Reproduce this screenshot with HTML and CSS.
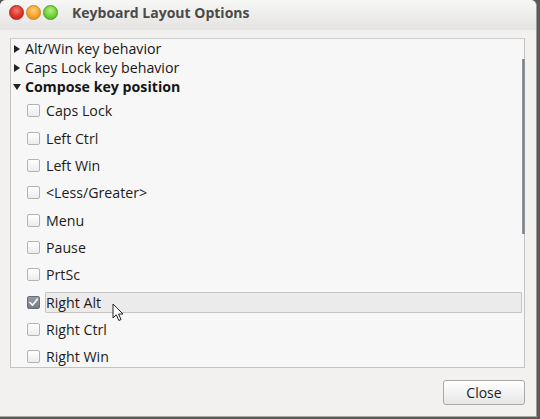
FILE: index.html
```html
<!DOCTYPE html>
<html>
<head>
<meta charset="utf-8">
<link rel="stylesheet" href="styles.css">
</head>
<body>
<div class="window">
  <div class="titlebar">
    <div class="wbtns">
      <span class="wbtn close"></span>
      <span class="wbtn min"></span>
      <span class="wbtn max"></span>
    </div>
    <span class="title">Keyboard Layout Options</span>
  </div>
  <div class="content">
    <div class="tree">
      <div class="group"><span class="tri right"></span><span>Alt/Win key behavior</span></div>
      <div class="group"><span class="tri right"></span><span>Caps Lock key behavior</span></div>
      <div class="group bold"><span class="tri down"></span><span>Compose key position</span></div>
      <div class="options">
        <div class="opt"><span class="cb"></span><span class="lbl">Caps Lock</span></div>
        <div class="opt"><span class="cb"></span><span class="lbl">Left Ctrl</span></div>
        <div class="opt"><span class="cb"></span><span class="lbl">Left Win</span></div>
        <div class="opt"><span class="cb"></span><span class="lbl">&lt;Less/Greater&gt;</span></div>
        <div class="opt"><span class="cb"></span><span class="lbl">Menu</span></div>
        <div class="opt"><span class="cb"></span><span class="lbl">Pause</span></div>
        <div class="opt"><span class="cb"></span><span class="lbl">PrtSc</span></div>
        <div class="opt hover"><span class="cb checked"><svg viewBox="0 0 13 13" width="13" height="13"><path d="M3 6.5 L5.5 9.2 L10.3 3.2" fill="none" stroke="#f4f4f4" stroke-width="1.8" stroke-linecap="round" stroke-linejoin="round"/></svg></span><span class="lbl">Right Alt</span></div>
        <div class="opt"><span class="cb"></span><span class="lbl">Right Ctrl</span></div>
        <div class="opt"><span class="cb"></span><span class="lbl">Right Win</span></div>
      </div>
      <div class="scrollbar"></div>
      <svg class="cursor" viewBox="0 0 13 20" width="13" height="20"><path d="M1 1 L1 15 L4.3 11.8 L6.8 17.5 L9 16.5 L6.6 11 L11 11 Z" fill="#ffffff" stroke="#222" stroke-width="1" stroke-linejoin="round"/></svg>
    </div>
    <div class="actions">
      <button class="btn">Close</button>
    </div>
  </div>
</div>
</body>
</html>
```

FILE: styles.css
```css
html, body {
  margin: 0;
  padding: 0;
}
body {
  width: 540px;
  height: 419px;
  background: #5a5a58;
  font-family: "Open Sans", "DejaVu Sans", sans-serif;
  color: #3a3a3a;
  overflow: hidden;
}
.window {
  width: 536px;
  height: 416px;
  background: #f2f1f0;
  border-right: 1px solid #9a9a9a;
  border-bottom: 1px solid #a9a9a9;
  border-top-left-radius: 6px;
  border-top-right-radius: 6px;
  overflow: hidden;
}
.titlebar {
  height: 30px;
  box-sizing: border-box;
  display: flex;
  align-items: flex-start;
  background: linear-gradient(#f7f7f6, #e4e3e1);
  padding: 5px 0 0 9px;
}
.wbtns {
  display: flex;
  gap: 2px;
}
.wbtn {
  width: 15px;
  height: 15px;
  border-radius: 50%;
  box-sizing: border-box;
  display: block;
}
.wbtn.close {
  background: radial-gradient(circle at 50% 35%, #f67a6a 0%, #e0332a 55%, #b41c16 100%);
  border: 1px solid #a52a20;
}
.wbtn.min {
  background: radial-gradient(circle at 50% 35%, #ffd27a 0%, #f6a22a 55%, #d97f0e 100%);
  border: 1px solid #c9861e;
}
.wbtn.max {
  background: radial-gradient(circle at 50% 35%, #b6ef7a 0%, #6fd23a 55%, #43a41c 100%);
  border: 1px solid #4c9b25;
}
.title {
  margin-left: 14px;
  font-weight: bold;
  font-size: 14px;
  line-height: 16px;
  color: #4a4a48;
}
.content {
  padding: 8px 11px 0 10px;
}
.tree {
  position: relative;
  height: 328px;
  background: #f7f7f7;
  border: 1px solid #c3c3c3;
  border-top-color: #d0d0d0;
  font-size: 14.2px;
}
.group {
  height: 19px;
  display: flex;
  align-items: center;
  padding-left: 3px;
  color: #161616;
}
.group.bold {
  font-weight: bold;
}
.tri {
  width: 0;
  height: 0;
  margin-right: 5px;
}
.tri.right {
  border-top: 4px solid transparent;
  border-bottom: 4px solid transparent;
  border-left: 6px solid #222;
}
.tri.down {
  border-left: 4px solid transparent;
  border-right: 4px solid transparent;
  border-top: 6px solid #222;
  margin-left: -1px;
  margin-right: 4px;
}
.options {
  padding-top: 1.3px;
}
.opt {
  height: 27.3px;
  display: flex;
  align-items: center;
  padding-left: 16px;
  color: #1c1c1c;
}
.cb {
  width: 13px;
  height: 13px;
  box-sizing: border-box;
  border: 1px solid #b3b3b3;
  border-radius: 2px;
  background: linear-gradient(#ffffff, #ececec);
  margin-right: 5px;
  flex: none;
  display: block;
}
.cb.checked {
  background: linear-gradient(#959aa2, #767b84);
  border-color: #6a6e76;
}
.cb svg {
  display: block;
  margin: -1px 0 0 -1px;
}
.lbl {
  flex: 1;
  display: flex;
  align-items: center;
  height: 21px;
  padding-left: 0;
  margin-right: 2px;
  box-sizing: border-box;
  border: 1px solid transparent;
}
.opt.hover .lbl {
  background: #ebebeb;
  border-color: #c5c5c5;
  border-radius: 1px;
}
.scrollbar {
  position: absolute;
  right: -1px;
  top: 20px;
  width: 3px;
  height: 175px;
  background: linear-gradient(90deg, #9fa3aa, #7a7f88, #9fa3aa);
}
.cursor {
  position: absolute;
  left: 101px;
  top: 264px;
}
.actions {
  display: flex;
  justify-content: flex-end;
  padding-top: 12px;
}
.btn {
  width: 82px;
  height: 25px;
  font-family: inherit;
  font-size: 14px;
  color: #1e1e1e;
  border: 1px solid #a9a9a9;
  border-radius: 3px;
  background: linear-gradient(#ffffff, #e6e6e6);
  padding: 0;
}
```
